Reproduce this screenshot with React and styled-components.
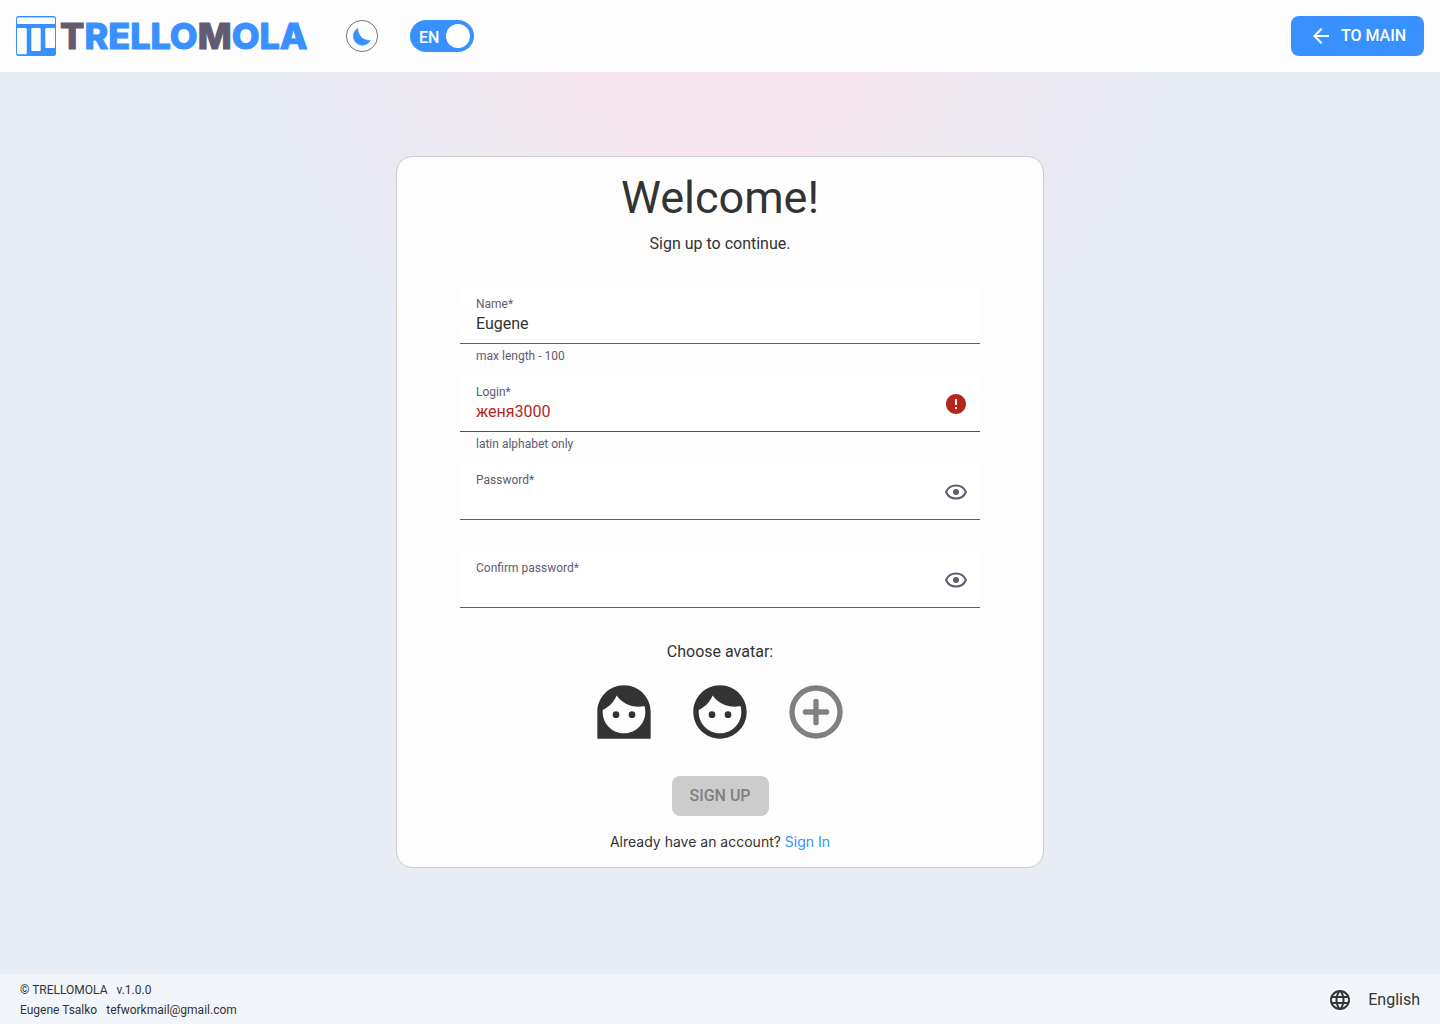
import React, { useState } from "react";
import styled, { createGlobalStyle, ThemeProvider } from "styled-components";
import { MdArrowBack, MdError, MdFace, MdLanguage } from "react-icons/md";

const theme = {
  blue: "#3891ff",
  ink: "#333333",
  plum: "#625b71",
  danger: "#b3261e",
  surface: "#fdfdfd",
  outline: "#cccccc",
};

const GlobalStyle = createGlobalStyle`
  *, *::before, *::after { box-sizing: border-box; }
  body {
    margin: 0;
    font-family: Roboto, "Noto Sans", sans-serif;
    font-size: 16px;
    line-height: 24px;
    color: ${theme.ink};
  }
  button, input { font: inherit; color: inherit; }
  button { cursor: pointer; }
`;

const Page = styled.div`
  display: flex;
  flex-direction: column;
  min-height: 100vh;
  background: #e7ecf5;
`;

const Header = styled.header`
  display: flex;
  align-items: center;
  gap: 32px;
  padding: 16px;
  background: ${(p) => p.theme.surface};
`;

const Brand = styled.a`
  display: flex;
  text-decoration: none;
`;

const LogoDrawing = styled.svg`
  overflow: visible;
`;

const LogoText = styled.text`
  font-family: Inter, sans-serif;
  font-weight: 800;
  font-size: 36px;
  stroke-width: 1px;
  stroke-linejoin: round;
  fill: ${(p) => p.theme.blue};
  stroke: ${(p) => p.theme.blue};
`;

const LogoAccent = styled.tspan`
  fill: ${(p) => p.theme.plum};
  stroke: ${(p) => p.theme.plum};
`;

const ThemeButton = styled.button`
  display: flex;
  width: 32px;
  height: 32px;
  padding: 0;
  border: 0;
  border-radius: 50%;
  background: none;
`;

const LanguageSwitch = styled.label`
  position: relative;
  display: flex;
  align-items: center;
  justify-content: space-between;
  width: 64px;
  height: 32px;
  padding: 4px 4px 4px 9px;
  border-radius: 16px;
  background: ${(p) => p.theme.blue};
  color: #fff;
  font-weight: 500;
  cursor: pointer;
`;

const SwitchInput = styled.input`
  position: absolute;
  inset: 0;
  margin: 0;
  opacity: 0;
`;

const SwitchText = styled.span`
  padding-top: 3px;
`;

const SwitchThumb = styled.span`
  width: 24px;
  height: 24px;
  border-radius: 50%;
  background: #fff;
`;

const ActionButton = styled.button`
  display: flex;
  align-items: center;
  justify-content: center;
  gap: 8px;
  min-width: ${(p) => (p.$wide ? 133 : 97)}px;
  height: 40px;
  padding: 0 16px;
  border: 0;
  border-radius: 8px;
  background: ${(p) => p.theme.blue};
  color: #fff;
  font-weight: 500;
  text-transform: uppercase;

  &:disabled {
    background: ${(p) => p.theme.outline};
    color: #808080;
    cursor: default;
  }
`;

const HeaderEnd = styled.div`
  margin-left: auto;
`;

const Main = styled.main`
  flex: 1;
  display: flex;
  align-items: center;
  justify-content: center;
  padding: 16px 16px 38px;
  background: radial-gradient(
    circle 480px at 50% -100px,
    #f5e6ef 0%,
    #f5e6ef 38%,
    #efe9f0 56%,
    #ebe9f3 76%,
    #e7ecf5 100%
  );
`;

const Card = styled.form`
  display: flex;
  flex-direction: column;
  align-items: center;
  width: 100%;
  max-width: 648px;
  padding: 16px 63px 15px;
  border: 1px solid ${(p) => p.theme.outline};
  border-radius: 16px;
  background: ${(p) => p.theme.surface};
`;

const Title = styled.h1`
  margin: 0 0 9px;
  font-size: 45px;
  line-height: 50px;
  font-weight: 400;
`;

const Subtitle = styled.p`
  margin: 0 0 32px;
`;

const Fields = styled.div`
  display: flex;
  flex-direction: column;
  width: 100%;
`;

const FieldBlock = styled.div`
  min-height: 88px;
`;

const FieldBox = styled.div`
  display: flex;
  align-items: center;
  height: 56px;
  padding: 8px 12px 7px 16px;
  border-bottom: 1px solid ${(p) => (p.$error ? p.theme.danger : p.theme.plum)};
  border-radius: 4px 4px 0 0;
  background: #fff;
`;

const FieldText = styled.div`
  flex: 1;
  display: flex;
  flex-direction: column;
`;

const FieldLabel = styled.label`
  font-size: 12px;
  line-height: 16px;
  color: ${(p) => p.theme.plum};
`;

const FieldInput = styled.input`
  width: 100%;
  height: 24px;
  padding: 0;
  border: 0;
  outline: 0;
  background: none;
  color: ${(p) => (p.$error ? p.theme.danger : p.theme.ink)};
`;

const Hint = styled.p`
  margin: 0;
  padding: 4px 16px 0;
  font-size: 12px;
  line-height: 16px;
  color: ${(p) => p.theme.plum};
`;

const IconButton = styled.button`
  display: flex;
  padding: 0;
  border: 0;
  background: none;
  color: ${(p) => p.theme.plum};
`;

const ErrorIcon = styled(MdError)`
  color: ${(p) => p.theme.danger};
`;

const AvatarTitle = styled.p`
  margin: 0 0 16px;
`;

const AvatarRow = styled.div`
  display: flex;
  gap: 32px;
  margin-bottom: 32px;
`;

const AvatarButton = styled.button`
  display: flex;
  padding: 0;
  border: 0;
  background: none;
  color: ${(p) => (p.$muted ? "#808080" : p.theme.ink)};
`;

const SignInLine = styled.p`
  margin: 16px 0 0;
  font-family: Inter, sans-serif;
  font-size: 14px;
  line-height: 20px;
`;

const TextLink = styled.a`
  color: ${(p) => p.theme.blue};
  text-decoration: none;
`;

const Footer = styled.footer`
  display: flex;
  align-items: center;
  justify-content: space-between;
  padding: 6px 20px 4px;
  background: #f2f5fa;
`;

const Credits = styled.div`
  font-size: 12px;
  line-height: 20px;
`;

const CreditLine = styled.div`
  display: flex;
  gap: 9px;
`;

const LocaleButton = styled.button`
  display: flex;
  align-items: center;
  gap: 16px;
  padding: 0;
  border: 0;
  background: none;
`;

function Logo() {
  return (
    <LogoDrawing width="298" height="40" viewBox="0 0 298 40" role="img" aria-label="Trellomola">
      <rect width="40" height="40" rx="2.5" fill={theme.blue} />
      <rect x="1" y="1.6" width="38" height="6.4" rx="1" fill="#fff" />
      <rect x="1" y="12" width="9.7" height="26.3" rx="1" fill="#fff" />
      <rect x="15.3" y="12" width="9.4" height="23" rx="1" fill="#fff" />
      <rect x="29.3" y="12" width="9.7" height="20" rx="1" fill="#fff" />
      <LogoText x="44" y="33">
        <LogoAccent>T</LogoAccent>RELLO<LogoAccent>M</LogoAccent>OLA
      </LogoText>
    </LogoDrawing>
  );
}

function MoonIcon() {
  return (
    <svg width="32" height="32" viewBox="0 0 32 32" aria-hidden="true">
      <circle cx="16" cy="16" r="15.6" fill="none" stroke="#555" strokeWidth=".8" />
      <path
        d="M11.8 8.4A9 9 0 1 0 24.3 20.4A11.5 11.5 0 0 1 11.8 8.4Z"
        fill={theme.blue}
        stroke={theme.blue}
        strokeWidth=".6"
        strokeLinejoin="round"
      />
    </svg>
  );
}

function EyeIcon() {
  return (
    <svg width="24" height="24" viewBox="0 0 24 24" fill="none" aria-hidden="true">
      <path
        d="M2 12C3.8 8 7.6 5.5 12 5.5S20.2 8 22 12C20.2 16 16.4 18.5 12 18.5S3.8 16 2 12Z"
        stroke="currentColor"
        strokeWidth="2"
        strokeLinejoin="round"
      />
      <circle cx="12" cy="12" r="3" fill="currentColor" />
    </svg>
  );
}

function LongHairFace() {
  return (
    <svg width="64" height="64" viewBox="0 0 24 24" fill="currentColor" aria-hidden="true">
      <circle cx="9" cy="13" r="1.25" />
      <circle cx="15" cy="13" r="1.25" />
      <path d="M12 2C6.48 2 2 6.48 2 12v10h20V12c0-5.52-4.48-10-10-10zm0 18c-4.41 0-8-3.59-8-8 0-.29.02-.58.05-.86 2.36-1.05 4.23-2.98 5.21-5.37C11.07 8.33 14.05 10 17.42 10c.78 0 1.53-.09 2.25-.26.21.71.33 1.47.33 2.26 0 4.41-3.59 8-8 8z" />
    </svg>
  );
}

function AddIcon() {
  return (
    <svg
      width="64"
      height="64"
      viewBox="0 0 24 24"
      fill="none"
      stroke="currentColor"
      strokeWidth="2"
      strokeLinecap="round"
      aria-hidden="true"
    >
      <circle cx="12" cy="12" r="9" />
      <path d="M12 8v8M8 12h8" />
    </svg>
  );
}

function Field({ id, label, initial = "", hint, error, secret }) {
  const [value, setValue] = useState(initial);
  const [shown, setShown] = useState(false);
  return (
    <FieldBlock>
      <FieldBox $error={error}>
        <FieldText>
          <FieldLabel htmlFor={id}>{label}*</FieldLabel>
          <FieldInput
            id={id}
            type={secret && !shown ? "password" : "text"}
            value={value}
            onChange={(e) => setValue(e.target.value)}
            $error={error}
            aria-invalid={error ? true : undefined}
            spellCheck={false}
          />
        </FieldText>
        {error && <ErrorIcon size={24} />}
        {secret && (
          <IconButton type="button" aria-label={`Show ${label}`} onClick={() => setShown(!shown)}>
            <EyeIcon />
          </IconButton>
        )}
      </FieldBox>
      {hint && <Hint>{hint}</Hint>}
    </FieldBlock>
  );
}

export default function App() {
  return (
    <ThemeProvider theme={theme}>
      <GlobalStyle />
      <Page>
        <Header>
          <Brand href="#main">
            <Logo />
          </Brand>
          <ThemeButton type="button" aria-label="Dark theme">
            <MoonIcon />
          </ThemeButton>
          <LanguageSwitch>
            <SwitchInput type="checkbox" defaultChecked />
            <SwitchText>EN</SwitchText>
            <SwitchThumb />
          </LanguageSwitch>
          <HeaderEnd>
            <ActionButton type="button" $wide>
              <MdArrowBack size={24} />
              To main
            </ActionButton>
          </HeaderEnd>
        </Header>
        <Main>
          <Card onSubmit={(e) => e.preventDefault()}>
            <Title>Welcome!</Title>
            <Subtitle>Sign up to continue.</Subtitle>
            <Fields>
              <Field id="name" label="Name" initial="Eugene" hint="max length - 100" />
              <Field id="login" label="Login" initial="женя3000" hint="latin alphabet only" error />
              <Field id="password" label="Password" secret />
              <Field id="confirm" label="Confirm password" secret />
            </Fields>
            <AvatarTitle>Choose avatar:</AvatarTitle>
            <AvatarRow>
              <AvatarButton type="button" aria-label="Long hair avatar">
                <LongHairFace />
              </AvatarButton>
              <AvatarButton type="button" aria-label="Short hair avatar">
                <MdFace size={64} />
              </AvatarButton>
              <AvatarButton type="button" aria-label="Add avatar" $muted>
                <AddIcon />
              </AvatarButton>
            </AvatarRow>
            <ActionButton type="submit" disabled>
              Sign up
            </ActionButton>
            <SignInLine>
              Already have an account? <TextLink href="#signin">Sign In</TextLink>
            </SignInLine>
          </Card>
        </Main>
        <Footer>
          <Credits>
            <CreditLine>
              <span>© TRELLOMOLA</span>
              <span>v.1.0.0</span>
            </CreditLine>
            <CreditLine>
              <span>Eugene Tsalko</span>
              <span>tefworkmail@gmail.com</span>
            </CreditLine>
          </Credits>
          <LocaleButton type="button">
            <MdLanguage size={24} />
            English
          </LocaleButton>
        </Footer>
      </Page>
    </ThemeProvider>
  );
}
